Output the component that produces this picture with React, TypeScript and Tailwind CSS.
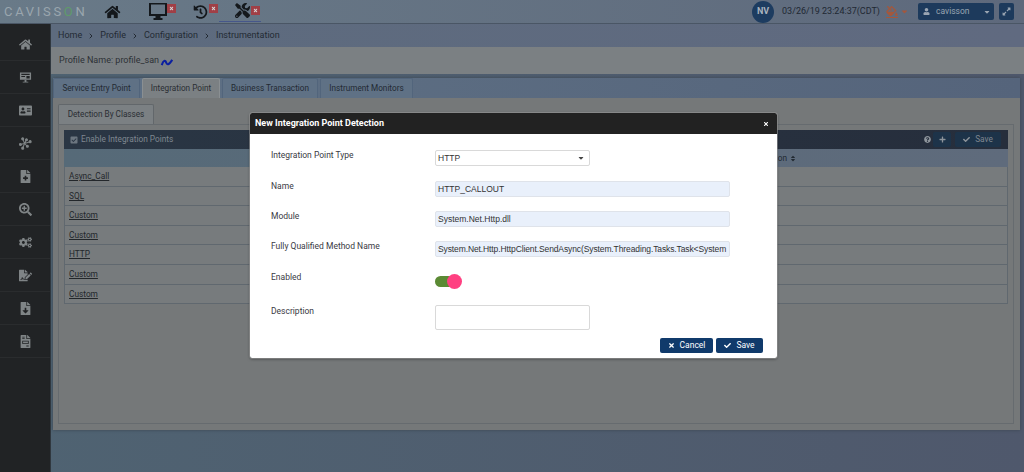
import React from "react";
import { ChevronRight } from "lucide-react";
import {
  FaHome, FaAddressCard, FaFileMedical, FaSearchPlus, FaCogs, FaFileSignature, FaFileDownload, FaFileInvoice,
  FaTools, FaHistory, FaFillDrip, FaUser, FaCheck, FaTimes, FaPlus, FaQuestionCircle, FaCaretDown, FaExpandAlt, FaSort, FaCheckSquare,
} from "react-icons/fa";

function Screen({ className }: { className?: string }) {
  return (
    <svg viewBox="0 0 14 13" className={className} fill="currentColor">
      <path d="M1 1h12v8H1z M2.5 2.5v1.2h9V2.5z M2.5 5v1h4V5z M8 5v2.5h3.5V5z" fillRule="evenodd" />
      <path d="M6 9h2v2h2v1H4v-1h2z" />
    </svg>
  );
}

function Branch({ className }: { className?: string }) {
  return (
    <svg viewBox="0 0 14 14" className={className} fill="none" stroke="currentColor" strokeWidth="1.1">
      <path d="M1 8 L6 7 L12 5 M6 7 L4 2 M6 7 L8 3 M6 7 L4 12 M6 7 L9 10" />
      <circle cx="4" cy="2" r="1.1" fill="currentColor" />
      <circle cx="8" cy="3" r="1.1" fill="currentColor" />
      <circle cx="12" cy="5" r="1.1" fill="currentColor" />
      <circle cx="9" cy="10" r="1.1" fill="currentColor" />
      <circle cx="4" cy="12" r="1.1" fill="currentColor" />
      <circle cx="1.5" cy="8" r="1.1" fill="currentColor" />
    </svg>
  );
}

const sideIcons = [FaHome, Screen, FaAddressCard, Branch, FaFileMedical, FaSearchPlus, FaCogs, FaFileSignature, FaFileDownload, FaFileInvoice];
const rows = ["Async_Call", "SQL", "Custom", "Custom", "HTTP", "Custom", "Custom"];
const tabs = ["Service Entry Point", "Integration Point", "Business Transaction", "Instrument Monitors"];

function Badge() {
  return (
    <span className="flex h-[9px] w-[9px] items-center justify-center bg-[#a03f46] text-[#d8d8d8]">
      <FaTimes className="h-[5px] w-[5px]" />
    </span>
  );
}

function Field({ label, children, className }: { label: string; children: React.ReactNode; className: string }) {
  return (
    <div className={`flex items-start ${className}`}>
      <div className="w-[164px] text-[8.5px] leading-[10px] text-[#3a3a44]">{label}</div>
      {children}
    </div>
  );
}

function Input({ value, tight }: { value: string; tight?: boolean }) {
  return (
    <div className={`flex h-[16px] w-[295px] items-center whitespace-nowrap rounded-[2px] border border-[#dfe3ea] bg-[#e9f0fb] pl-[2px] font-['Liberation_Sans',sans-serif] text-[8.5px] text-[#333] ${tight ? "tracking-[-0.11px]" : ""}`}>
      {value}
    </div>
  );
}

function Sep() {
  return <ChevronRight className="mx-[5px] h-[8px] w-[8px]" strokeWidth={3} />;
}

export default function App() {
  return (
    <div className="relative flex h-[472px] w-[1024px] flex-col overflow-hidden bg-gradient-to-r from-[#4f6372] to-[#4f586c] font-['Roboto',sans-serif]">
      {/* top bar */}
      <div className="flex h-[24px] shrink-0 items-center border-b border-[#4a5665] bg-gradient-to-r from-[#697a88] to-[#5e697c]">
        <div className="w-[94px] whitespace-nowrap pl-[4px] text-[13px] font-normal leading-none tracking-[2.7px] text-[#9aa6ae]">
          CAVISS<span className="text-[#5f9a6a]">O</span>N
        </div>
        <FaHome className="ml-[10px] h-[14px] w-[17px] text-[#14181c]" />
        <svg viewBox="0 0 18 17" className="ml-[28px] h-[17px] w-[18px] text-[#14181c]" fill="currentColor">
          <path fillRule="evenodd" d="M0 0h18v13H0z M2 1.5v9.5h14V1.5z" />
          <path d="M6.5 13h5v2h2v2h-9v-2h2z" />
        </svg>
        <span className="-mt-[6px]"><Badge /></span>
        <FaHistory className="ml-[17px] h-[14px] w-[15px] text-[#14181c]" />
        <span className="ml-[1px] -mt-[6px]"><Badge /></span>
        <span className="ml-[1px] flex h-[21px] items-start gap-[1px] border-b border-[#46568a] pl-[16px] pr-[1px] pt-[2px]">
          <FaTools className="h-[15px] w-[15px] text-[#14181c]" />
          <span className="mt-[3px]"><Badge /></span>
        </span>
        <div className="ml-auto flex items-center">
          <span className="flex h-[22px] w-[22px] items-center justify-center rounded-full bg-[#1d3c60] text-[9px] font-bold text-[#a9b3bd]">NV</span>
          <span className="ml-[8px] text-[9px] text-[#1f2833]">03/26/19 23:24:37(CDT)</span>
          <span className="ml-[6px] border-b border-[#a5573b] pb-[1px]">
            <FaFillDrip className="h-[10px] w-[12px] text-[#a5573b]" />
          </span>
          <FaCaretDown className="ml-[2px] h-[9px] w-[9px] text-[#a5573b]" />
          <span className="ml-[9px] flex h-[17px] w-[76px] items-center rounded-[2px] bg-[#1d3a5c] pl-[5px] text-[8.5px] text-[#9aa5b2]">
            <FaUser className="h-[7px] w-[7px]" />
            <span className="ml-[6px]">cavisson</span>
            <FaCaretDown className="ml-auto mr-[3px] h-[8px] w-[8px]" />
          </span>
          <span className="ml-[5px] mr-[10px] flex h-[17px] w-[15px] items-center justify-center rounded-[2px] bg-[#1d3a5c] text-[#9aa5b2]">
            <FaExpandAlt className="h-[9px] w-[9px]" />
          </span>
        </div>
      </div>

      <div className="flex min-h-0 flex-1">
        {/* sidebar */}
        <div className="flex w-[51px] shrink-0 flex-col border-r border-[#30383f] bg-[#212325] pt-[4px]">
          {sideIcons.map((I, i) => (
            <div key={i} className="flex h-[33px] shrink-0 items-center justify-center border-b border-[#2a2c2e]">
              <I className="h-[13px] w-[13px] text-[#7f8486]" />
            </div>
          ))}
        </div>
        {/* content */}
        <div className="flex min-w-0 flex-1 flex-col">
          <div className="flex h-[23px] items-center bg-gradient-to-r from-[#5d6b7e] to-[#606a80] pl-[7px] text-[9px] text-[#232a33]">
            Home<Sep />Profile<Sep />Configuration<Sep />Instrumentation
          </div>
          <div className="flex h-[27px] items-center bg-[#7b8083] pl-[8px] text-[9px] text-[#2d3136]">
            Profile Name: profile_san
            <svg viewBox="0 0 14 8" className="ml-[1px] mt-[3px] h-[7px] w-[14px]"><path d="M1 7 C3 1 5 1 6 4 S9 7 13 1" fill="none" stroke="#0b1fa0" strokeWidth="2.4" /></svg>
          </div>
          {/* card */}
          <div className="ml-[2px] mr-[4px] mt-[4px] flex h-[352px] flex-col bg-[#757879] shadow-[0_0_3px_#3a4550]">
            <div className="flex h-[20px] items-end gap-[2px] bg-gradient-to-r from-[#5f7185] to-[#55647b]">
              {tabs.map((t, i) => (
                <div
                  key={t}
                  className={`flex h-[20px] items-center justify-center rounded-t-[2px] border border-b-0 text-[8.2px] ${
                    i === 1 ? "w-[78px] border-[#8a8f92] bg-[#7b8083] text-[#2a2e33]" : "border-[#52657c] bg-[#5f7185] text-[#232a33]"
                  } ${i === 0 ? "w-[87px]" : i === 2 ? "w-[96px]" : i === 3 ? "w-[93px]" : ""}`}
                >
                  {t}
                </div>
              ))}
            </div>
            <div className="flex min-h-0 flex-1 flex-col pl-[5px] pr-[6px] pt-[6px] pb-[6px]">
              <div className="flex h-[20px] w-[96px] items-center justify-center rounded-t-[2px] border border-b-0 border-[#62676b] bg-[#7b8083] text-[8.2px] text-[#2a2e33]">
                Detection By Classes
              </div>
              <div className="flex-1 border border-[#666b6f] pl-[5px] pr-[5px] pt-[5px]">
                <div className="flex h-[19px] items-center bg-gradient-to-r from-[#2a3644] to-[#262e3c] pl-[6px] text-[8.3px] text-[#7f8790]">
                  <FaCheckSquare className="h-[8px] w-[8px] text-[#6c7680]" />
                  <span className="ml-[3px]">Enable Integration Points</span>
                  <span className="ml-auto flex items-center gap-[2px] pr-[7px]">
                    <FaQuestionCircle className="h-[7px] w-[7px] text-[#8d949b]" />
                    <span className="flex h-[15px] w-[18px] items-center justify-center rounded-[2px] bg-[#1d3349]">
                      <FaPlus className="h-[7px] w-[7px] text-[#8d949b]" />
                    </span>
                    <span className="ml-[2px] flex h-[15px] w-[46px] items-center justify-center gap-[5px] rounded-[2px] bg-[#1d3349]">
                      <FaCheck className="h-[7px] w-[7px] text-[#8d949b]" />Save
                    </span>
                  </span>
                </div>
                <div className="flex h-[18px] items-center justify-end bg-gradient-to-r from-[#566a78] to-[#5f6b7c] pr-[212px] text-[8.3px] text-[#222a32]">
                  on<FaSort className="ml-[3px] h-[7px] w-[6px]" />
                </div>
                {rows.map((r, i) => (
                  <div key={i} className="flex h-[19.6px] items-center border border-t-0 border-[#60686f] bg-[#777b7d] pl-[4px] text-[8.3px] text-[#23272b] underline">
                    {r}
                  </div>
                ))}
              </div>
            </div>
          </div>
        </div>
      </div>

      {/* modal */}
      <div className="absolute left-[250px] top-[113px] flex h-[245px] w-[527px] flex-col rounded-[2px] bg-white shadow-[0_1px_3px_rgba(0,0,0,0.5)] outline outline-1 outline-[#9a9a9a]/60">
        <div className="flex h-[21px] shrink-0 items-center justify-between rounded-t-[2px] bg-[#222222] pl-[5px] pr-[8px] text-[9px] font-bold text-white">
          New Integration Point Detection
          <FaTimes className="h-[6px] w-[6px]" />
        </div>
        <div className="flex flex-1 flex-col pl-[21px]">
          <Field label="Integration Point Type" className="mt-[16px]">
            <div className="flex h-[16px] w-[155px] items-center justify-between rounded-[2px] border border-[#d9d9d9] bg-white pl-[2px] pr-[4px] font-['Liberation_Sans',sans-serif] text-[8.5px] text-[#333]">
              HTTP
              <FaCaretDown className="h-[8px] w-[8px] text-[#444]" />
            </div>
          </Field>
          <Field label="Name" className="mt-[15px]"><Input value="HTTP_CALLOUT" /></Field>
          <Field label="Module" className="mt-[14px]"><Input value="System.Net.Http.dll" /></Field>
          <Field label="Fully Qualified Method Name" className="mt-[14px]"><Input tight value="System.Net.Http.HttpClient.SendAsync(System.Threading.Tasks.Task<System" /></Field>
          <Field label="Enabled" className="mt-[15px]">
            <div className="relative mt-[3px] h-[13px] w-[27px]">
              <div className="mt-[1px] h-[11px] w-[22px] rounded-full bg-[#5b8a34]" />
              <div className="absolute right-0 -top-[1px] h-[15px] w-[15px] rounded-full bg-[#ff4081]" />
            </div>
          </Field>
          <Field label="Description" className="mt-[18px]">
            <div className="-mt-[1px] h-[25px] w-[155px] rounded-[2px] border border-[#d9d9d9] bg-white" />
          </Field>
          <div className="mt-[8px] flex justify-end gap-[3px] pr-[14px]">
            <span className="flex h-[15px] w-[53px] items-center justify-center gap-[5px] rounded-[2px] bg-[#103a6b] text-[8.5px] text-white">
              <FaTimes className="h-[7px] w-[7px]" />Cancel
            </span>
            <span className="flex h-[15px] w-[47px] items-center justify-center gap-[5px] rounded-[2px] bg-[#103a6b] text-[8.5px] text-white">
              <FaCheck className="h-[7px] w-[7px]" />Save
            </span>
          </div>
        </div>
      </div>
    </div>
  );
}
